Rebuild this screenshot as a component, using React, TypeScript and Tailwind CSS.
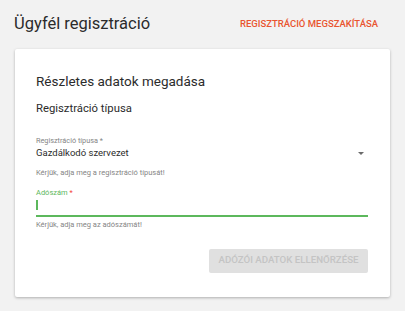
import { useState } from "react"

const App = () => {
  const [tax, setTax] = useState("")
  return (
    <div className="min-h-[311px] w-[405px] bg-[#f2f2f2] font-['Roboto',sans-serif] pt-[14px]">
      <div className="flex items-start justify-between pl-[14px] pr-[27px]">
        <h1 className="text-[16.5px] leading-[20px] text-[#2b2b2b]">Ügyfél regisztráció</h1>
        <button className="mt-[3.5px] text-[9.5px] leading-[12px] font-medium uppercase text-[#e9552f]">
          Regisztráció megszakítása
        </button>
      </div>
      <div className="mx-[15px] mt-[15px] h-[248px] bg-white rounded-[2px] shadow-[0_1px_3px_rgba(0,0,0,0.28)] px-[21px] pt-[24px]">
        <h2 className="text-[13.5px] leading-[16px] text-[#2b2b2b]">Részletes adatok megadása</h2>
        <h3 className="mt-[12.5px] text-[11.3px] leading-[14px] text-[#2b2b2b]">Regisztráció típusa</h3>
        <div className="mt-[20.5px] w-[332px]">
          <label className="block text-[7.3px] leading-[9px] text-[#858585]">Regisztráció típusa *</label>
          <div className="flex items-center justify-between h-[12px] mt-[2px]">
            <span className="text-[9.5px] leading-[12px] text-[#2b2b2b]">Gazdálkodó szervezet</span>
            <span className="mr-[4px] mt-[1px] w-0 h-0 border-l-[3px] border-r-[3px] border-t-[3px] border-l-transparent border-r-transparent border-t-[#6b6b6b]" />
          </div>
          <p className="mt-[8.5px] text-[7.5px] leading-[9px] text-[#858585]">Kérjük, adja meg a regisztráció típusát!</p>
        </div>
        <div className="mt-[11px] w-[332px]">
          <label className="block text-[7.5px] leading-[9px] text-[#5cb85c]">
            Adószám <span className="text-[#f44336]">*</span>
          </label>
          <div className="flex items-center h-[20px] border-b-2 border-[#5cb85c]">
            <span className="w-[1.5px] h-[10px] bg-[#5cb85c] mt-[-1px]" />
            <input
              value={tax}
              onChange={(e) => setTax(e.target.value)}
              className="flex-1 h-full text-[9.5px] outline-none bg-transparent"
            />
          </div>
          <p className="mt-[3px] text-[7.5px] leading-[9px] text-[#858585]">Kérjük, adja meg az adószámát!</p>
        </div>
        <div className="flex justify-end w-[332px] mt-[20px]">
          <button disabled className="h-[24px] w-[159px] bg-[#e0e0e0] rounded-[2px] text-[9.7px] font-medium uppercase text-[#c4c4c4]">
            Adózói adatok ellenőrzése
          </button>
        </div>
      </div>
    </div>
  )
}

export default App
